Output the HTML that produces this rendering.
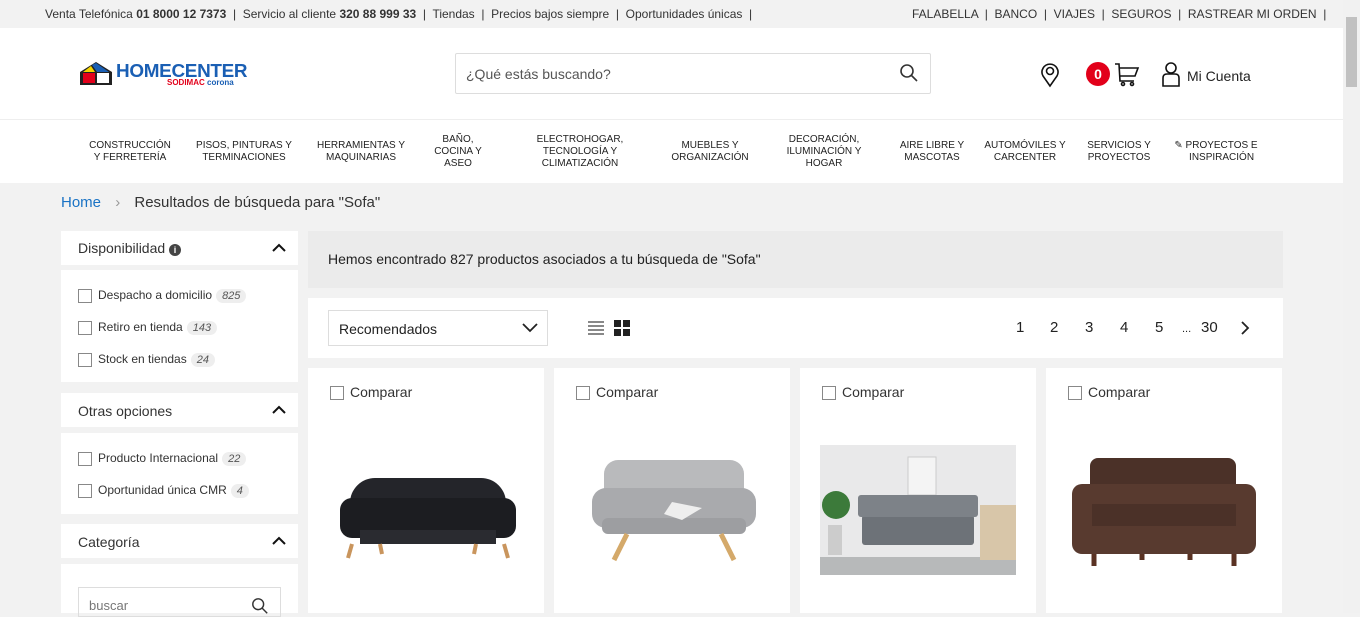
<!DOCTYPE html><html><head><meta charset="utf-8"><style>
*{box-sizing:border-box;margin:0;padding:0}
body{width:1360px;height:613px;overflow:hidden;background:#f2f2f2;font-family:"Liberation Sans",sans-serif;color:#333;position:relative}
.abs{position:absolute}
.top{left:0;top:0;width:1343px;height:28px;background:#f2f2f2;font-size:12px;color:#333;white-space:nowrap}
.top span{position:absolute;top:7px}
.hdr{left:0;top:28px;width:1343px;height:92px;background:#fff;border-bottom:1px solid #eee}
.nav{left:0;top:120px;width:1343px;height:63px;background:#fff}
.nav div{position:absolute;font-size:10px;text-align:center;line-height:12px;color:#222;transform:translateX(-50%);white-space:nowrap}
.sb{left:1343px;top:0;width:17px;height:613px;background:#f1f1f1}
.box{background:#fff;position:absolute}
.cb{display:inline-block;width:14px;height:14px;border:1px solid #888;vertical-align:middle;margin-right:6px;background:#fff}
.cnt{display:inline-block;background:#eee;border-radius:8px;font-size:11px;font-style:italic;padding:1px 6px;margin-left:4px;color:#555}
.fi{position:absolute;left:17px;font-size:12px;color:#333;white-space:nowrap}
.chev{position:absolute;right:12px;top:12px}
.card{position:absolute;top:368px;width:236px;height:245px;background:#fff}
.card .c{position:absolute;left:22px;top:16px;font-size:14px;color:#333}
.pg{position:absolute;top:21px;font-size:15px;color:#222}
</style></head><body>
<div class="abs top">
<span style="left:45px">Venta Telefónica <b>01 8000 12 7373</b> &nbsp;|&nbsp; Servicio al cliente <b>320 88 999 33</b> &nbsp;|&nbsp; Tiendas &nbsp;|&nbsp; Precios bajos siempre &nbsp;|&nbsp; Oportunidades únicas &nbsp;|</span>
<span style="left:912px">FALABELLA &nbsp;|&nbsp; BANCO &nbsp;|&nbsp; VIAJES &nbsp;|&nbsp; SEGUROS &nbsp;|&nbsp; RASTREAR MI ORDEN &nbsp;|</span>
</div>
<div class="abs hdr">
<svg class="abs" style="left:78px;top:32px" width="36" height="26" viewBox="0 0 36 26"><path d="M2 12 L18 2 L34 12 V25 H2 Z" fill="#222"/><path d="M5 12 L13 6 L17 12Z" fill="#f5d400"/><path d="M14 5 L18 3 L31 12 H19Z" fill="#1a5fb4"/><rect x="5" y="13" width="12" height="10" fill="#e2001a"/><rect x="19" y="13" width="12" height="10" fill="#fff"/></svg>
<div class="abs" style="left:116px;top:33px;font-weight:bold;font-size:18px;color:#1a5fb4;letter-spacing:-0.3px;transform:scaleX(1.05);transform-origin:left">HOMECENTER</div>
<div class="abs" style="left:167px;top:50px;font-size:8px;font-weight:bold;color:#e2001a">SODIMAC <span style="color:#1a5fb4">corona</span></div>
<div class="abs" style="left:455px;top:25px;width:476px;height:41px;border:1px solid #ddd;border-radius:2px;font-size:14px;color:#555;padding:12px 10px">¿Qué estás buscando?</div>
<svg class="abs" style="left:899px;top:35px" width="20" height="20" viewBox="0 0 20 20" fill="none" stroke="#333" stroke-width="1.6"><circle cx="8" cy="8" r="6"/><path d="M12.5 12.5 L18 18"/></svg>
<svg class="abs" style="left:1039px;top:34px" width="22" height="26" viewBox="0 0 22 26" fill="none" stroke="#111" stroke-width="1.6"><path d="M11 24 L4 14 A8 8 0 1 1 18 14 Z"/><circle cx="11" cy="9" r="3.5"/></svg>
<div class="abs" style="left:1086px;top:34px;width:24px;height:24px;border-radius:50%;background:#e2001a;color:#fff;font-weight:bold;font-size:14px;text-align:center;line-height:24px">0</div>
<svg class="abs" style="left:1114px;top:33px" width="26" height="26" viewBox="0 0 26 26" fill="none" stroke="#111" stroke-width="1.6"><path d="M1 3 H5 L6 20 H20 M6 7 H24 L21 15 H6"/><circle cx="9" cy="23" r="1.5"/><circle cx="18" cy="23" r="1.5"/></svg>
<svg class="abs" style="left:1161px;top:33px" width="20" height="26" viewBox="0 0 20 26" fill="none" stroke="#111" stroke-width="1.6"><circle cx="10" cy="7" r="5"/><path d="M2 25 V17 Q2 13 6 13 H14 Q18 13 18 17 V25 Z"/></svg>
<div class="abs" style="left:1187px;top:40px;font-size:14px;color:#222">Mi Cuenta</div>
</div>
<div class="abs nav">
<div style="left:130px;top:20px">CONSTRUCCIÓN<br>Y FERRETERÍA</div>
<div style="left:244px;top:20px">PISOS, PINTURAS Y<br>TERMINACIONES</div>
<div style="left:361px;top:20px">HERRAMIENTAS Y<br>MAQUINARIAS</div>
<div style="left:458px;top:14px">BAÑO,<br>COCINA Y<br>ASEO</div>
<div style="left:580px;top:14px">ELECTROHOGAR,<br>TECNOLOGÍA Y<br>CLIMATIZACIÓN</div>
<div style="left:710px;top:20px">MUEBLES Y<br>ORGANIZACIÓN</div>
<div style="left:824px;top:14px">DECORACIÓN,<br>ILUMINACIÓN Y<br>HOGAR</div>
<div style="left:932px;top:20px">AIRE LIBRE Y<br>MASCOTAS</div>
<div style="left:1025px;top:20px">AUTOMÓVILES Y<br>CARCENTER</div>
<div style="left:1119px;top:20px">SERVICIOS Y<br>PROYECTOS</div>
<div style="left:1216px;top:20px">✎ PROYECTOS E<br>&nbsp;&nbsp;&nbsp;&nbsp;INSPIRACIÓN</div>
</div>
<div class="abs" style="left:61px;top:194px;font-size:15px;color:#333"><span style="color:#1a73c5">Home</span> <span style="color:#999;margin:0 10px">›</span> Resultados de búsqueda para "Sofa"</div>
<div class="box" style="left:61px;top:231px;width:237px;height:34px"><div class="fi" style="top:9px;font-size:14px">Disponibilidad <span style="display:inline-block;width:12px;height:12px;border-radius:50%;background:#444;color:#fff;font-size:9px;text-align:center;line-height:12px;font-weight:bold">i</span></div><svg class="chev" width="14" height="10" viewBox="0 0 14 10" fill="none" stroke="#111" stroke-width="2"><path d="M1 8 L7 2 L13 8"/></svg></div>
<div class="box" style="left:61px;top:270px;width:237px;height:112px">
<div class="fi" style="top:18px"><span class="cb"></span>Despacho a domicilio<span class="cnt">825</span></div>
<div class="fi" style="top:50px"><span class="cb"></span>Retiro en tienda<span class="cnt">143</span></div>
<div class="fi" style="top:82px"><span class="cb"></span>Stock en tiendas<span class="cnt">24</span></div></div>
<div class="box" style="left:61px;top:393px;width:237px;height:34px"><div class="fi" style="top:10px;font-size:14px">Otras opciones</div><svg class="chev" width="14" height="10" viewBox="0 0 14 10" fill="none" stroke="#111" stroke-width="2"><path d="M1 8 L7 2 L13 8"/></svg></div>
<div class="box" style="left:61px;top:433px;width:237px;height:81px">
<div class="fi" style="top:18px"><span class="cb"></span>Producto Internacional<span class="cnt">22</span></div>
<div class="fi" style="top:50px"><span class="cb"></span>Oportunidad única CMR<span class="cnt">4</span></div></div>
<div class="box" style="left:61px;top:524px;width:237px;height:34px"><div class="fi" style="top:10px;font-size:14px">Categoría</div><svg class="chev" width="14" height="10" viewBox="0 0 14 10" fill="none" stroke="#111" stroke-width="2"><path d="M1 8 L7 2 L13 8"/></svg></div>
<div class="box" style="left:61px;top:564px;width:237px;height:49px"><div class="abs" style="left:17px;top:23px;width:203px;height:30px;border:1px solid #ddd;font-size:13px;color:#777;padding:10px">buscar</div><svg class="abs" style="left:190px;top:33px" width="18" height="18" viewBox="0 0 20 20" fill="none" stroke="#333" stroke-width="1.6"><circle cx="8" cy="8" r="6"/><path d="M12.5 12.5 L18 18"/></svg></div>
<div class="abs" style="left:308px;top:231px;width:975px;height:57px;background:#ebebeb;font-size:14px;color:#222;padding:20px 20px">Hemos encontrado 827 productos asociados a tu búsqueda de "Sofa"</div>
<div class="box" style="left:308px;top:298px;width:975px;height:60px">
<div class="abs" style="left:20px;top:12px;width:220px;height:36px;border:1px solid #ddd;font-size:14px;color:#222;padding:10px">Recomendados</div>
<svg class="abs" style="left:214px;top:25px" width="16" height="10" viewBox="0 0 16 10" fill="none" stroke="#222" stroke-width="1.8"><path d="M1 1 L8 8 L15 1"/></svg>
<svg class="abs" style="left:280px;top:22px" width="16" height="16"><rect y="1" width="16" height="2" fill="#888"/><rect y="5" width="16" height="2" fill="#888"/><rect y="9" width="16" height="2" fill="#888"/><rect y="13" width="16" height="2" fill="#888"/></svg>
<svg class="abs" style="left:306px;top:22px" width="16" height="16"><rect width="7" height="7" fill="#222"/><rect x="9" width="7" height="7" fill="#222"/><rect y="9" width="7" height="7" fill="#222"/><rect x="9" y="9" width="7" height="7" fill="#222"/></svg>
<div class="pg" style="left:708px">1</div><div class="pg" style="left:742px">2</div><div class="pg" style="left:777px">3</div><div class="pg" style="left:812px">4</div><div class="pg" style="left:847px">5</div>
<div class="pg" style="left:874px;font-size:11px;top:25px">...</div><div class="pg" style="left:893px">30</div>
<svg class="abs" style="left:932px;top:23px" width="10" height="14" viewBox="0 0 10 14" fill="none" stroke="#222" stroke-width="1.8"><path d="M2 1 L8 7 L2 13"/></svg>
</div>
<div class="card" style="left:308px"><div class="c"><span class="cb"></span>Comparar</div>
<svg class="abs" style="left:32px;top:100px" width="176" height="95"><rect x="10" y="10" width="156" height="60" rx="25" fill="#24252a"/><rect x="0" y="30" width="176" height="40" rx="12" fill="#1c1d21"/><rect x="20" y="62" width="136" height="14" fill="#2a2b30"/><path d="M12 76 L8 90 M164 76 L168 90 M40 76 L42 86 M136 76 L134 86" stroke="#c9955d" stroke-width="4"/></svg></div>
<div class="card" style="left:554px"><div class="c"><span class="cb"></span>Comparar</div>
<svg class="abs" style="left:38px;top:90px" width="164" height="110"><rect x="12" y="2" width="140" height="50" rx="14" fill="#b9babc"/><rect x="0" y="30" width="164" height="40" rx="14" fill="#a9aaad"/><rect x="10" y="60" width="144" height="16" rx="6" fill="#9d9ea1"/><path d="M80 44 L110 50 L90 62 L72 56Z" fill="#eee"/><path d="M35 76 L22 102 M129 76 L142 102" stroke="#d4a96a" stroke-width="5"/></svg></div>
<div class="card" style="left:800px"><div class="c"><span class="cb"></span>Comparar</div>
<svg class="abs" style="left:20px;top:77px" width="196" height="130"><rect width="196" height="130" fill="#e9e9ea"/><rect y="112" width="196" height="18" fill="#b7b9ba"/><rect x="160" y="60" width="36" height="55" fill="#d8c6a9"/><rect x="88" y="12" width="28" height="38" fill="#f4f4f4" stroke="#ccc"/><rect x="42" y="70" width="112" height="30" rx="3" fill="#6d7278"/><rect x="38" y="50" width="120" height="22" rx="3" fill="#7d8288"/><circle cx="16" cy="60" r="14" fill="#3c7a3a"/><rect x="8" y="80" width="14" height="30" fill="#ccc"/></svg></div>
<div class="card" style="left:1046px"><div class="c"><span class="cb"></span>Comparar</div>
<svg class="abs" style="left:26px;top:86px" width="184" height="120"><rect x="18" y="4" width="146" height="50" rx="8" fill="#4b3128"/><rect x="0" y="30" width="184" height="70" rx="10" fill="#583a2f"/><rect x="20" y="50" width="144" height="22" fill="#4b3128"/><path d="M22 100 V112 M162 100 V112 M70 100 V106 M118 100 V106" stroke="#5a3223" stroke-width="5"/></svg></div>
<div class="abs sb"><div class="abs" style="left:3px;top:17px;width:11px;height:70px;background:#c1c1c1"></div></div>
</body></html>
